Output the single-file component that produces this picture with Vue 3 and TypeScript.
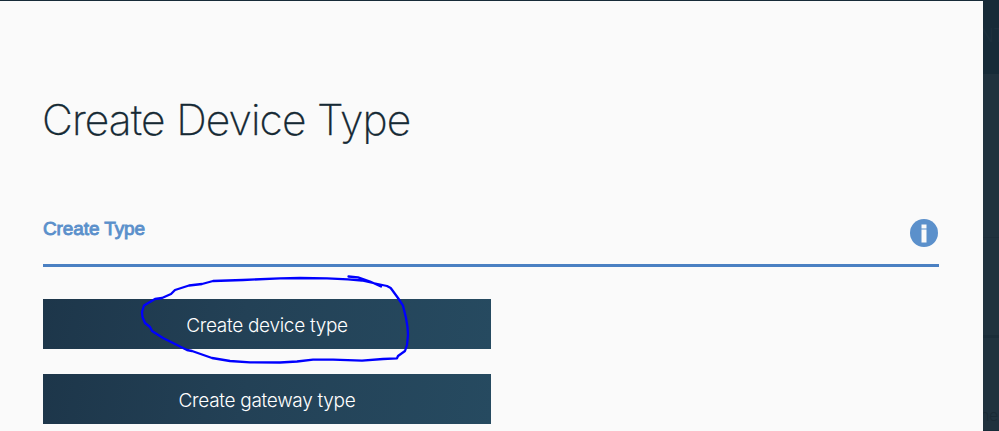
<script setup lang="ts">
import { ref } from 'vue'

interface TypeOption {
  id: string
  label: string
}

const options: TypeOption[] = [
  { id: 'device', label: 'Create device type' },
  { id: 'gateway', label: 'Create gateway type' },
]
const selected = ref<string>('device')
</script>

<template>
  <div class="page">
    <main class="dialog">
      <h1 class="title">Create Device Type</h1>
      <header class="section">
        <h2 class="section-name">Create Type</h2>
        <svg class="info" viewBox="0 0 28 28" aria-label="Information">
          <circle cx="14" cy="14" r="14" fill="#5b90cb" />
          <path d="M11.5 5.5h5v4h-5zM11.5 10.5h5v13h-5z" fill="#fafafa" />
        </svg>
      </header>
      <div class="options">
        <button
          v-for="option in options"
          :key="option.id"
          type="button"
          class="option"
          @click="selected = option.id"
        >
          {{ option.label }}
        </button>
      </div>
    </main>
    <aside class="backdrop">
      <div class="band top"><span class="ghost heading">NT</span></div>
      <div class="band middle"></div>
      <div class="band lower"></div>
      <div class="band bottom"><span class="ghost">ne</span></div>
      <div class="band end"></div>
    </aside>
    <svg class="marker" viewBox="0 0 999 431" aria-hidden="true">
      <path
        d="M280 278.4L243 280L213 281L202 284L189 285.5L175 290L171 294L162 298L155 299L144 305.5L142 312L142.5 317L145 323L150 327L152 331L163 338L175 344L187 350L192 351L212 358L230 361L250 362.3L280 362.5L297 361.5L313 359.6L333 359.7L362 360.7L383 359L397 358.3L398 356L405 351L407 345L408 335L407.5 327L406 318L403 305.7L398 298L390.7 288L387 286L373 283L362 280.5L348 279.3L327 278.3L300 278L280 278.4M348.5 276.5L358 277.3L370 281.5L381 286.5"
      />
    </svg>
  </div>
</template>

<style>
body {
  margin: 0;
  overflow: hidden;
}
</style>

<style scoped>
.page {
  position: relative;
  display: flex;
  width: 999px;
  height: 431px;
  box-sizing: border-box;
  overflow: hidden;
  font-family: Inter, "Liberation Sans", sans-serif;
  background: #172b38;
}
.dialog {
  width: 983px;
  margin-top: 1px;
  box-sizing: border-box;
  padding: 93px 44px 0 43px;
  background: #fafafa;
}
.title {
  margin: 0 0 0 -1px;
  font-size: 42.5px;
  line-height: 52px;
  font-weight: 250;
  letter-spacing: -0.9px;
  word-spacing: 0.5px;
  -webkit-text-stroke: 0.3px #152934;
  color: #152934;
  white-space: nowrap;
}
.section {
  display: flex;
  justify-content: space-between;
  width: 896px;
  height: 47px;
  margin-top: 71px;
  border-bottom: 3px solid #4a80c2;
}
.section-name {
  margin: 0;
  font-family: "Liberation Sans", sans-serif;
  font-size: 19px;
  line-height: 24px;
  font-weight: 400;
  letter-spacing: -0.1px;
  -webkit-text-stroke: 0.9px #5b90cb;
  color: #5b90cb;
}
.info {
  width: 28px;
  height: 28px;
  margin: 2px 1px 0 0;
}
.options {
  display: flex;
  flex-direction: column;
  gap: 25px;
  width: 448px;
  margin-top: 32px;
}
.option {
  height: 50px;
  padding: 2px 0 0;
  border: 0;
  background: linear-gradient(100deg, #1d364a 0%, #234156 45%, #264a60 100%);
  color: #fff;
  font-family: Inter, "Liberation Sans", sans-serif;
  font-size: 19px;
  font-weight: 300;
  letter-spacing: -0.3px;
}
.backdrop {
  display: flex;
  flex-direction: column;
  width: 16px;
  overflow: hidden;
}
.band {
  box-sizing: border-box;
  background: #20323e;
  overflow: hidden;
}
.top {
  height: 74px;
  padding-top: 26px;
  background: #172b38;
}
.middle {
  height: 163px;
}
.lower {
  height: 98px;
  border-top: 1px solid #1d2e3a;
}
.bottom {
  height: 95px;
  padding-top: 67px;
  border-top: 3px solid #1b2d39;
}
.end {
  height: 1px;
  background: #172b38;
}
.ghost {
  display: block;
  margin-left: -3px;
  font-size: 16px;
  line-height: 20px;
  font-weight: 300;
  letter-spacing: -0.5px;
  color: #1a2a35;
}
.heading {
  font-size: 18px;
  color: #1d303d;
}
.marker {
  position: absolute;
  inset: 0;
  width: 999px;
  height: 431px;
  pointer-events: none;
}
.marker path {
  fill: none;
  stroke: #0000fe;
  stroke-width: 2.3;
  stroke-linecap: round;
  stroke-linejoin: round;
}
</style>
